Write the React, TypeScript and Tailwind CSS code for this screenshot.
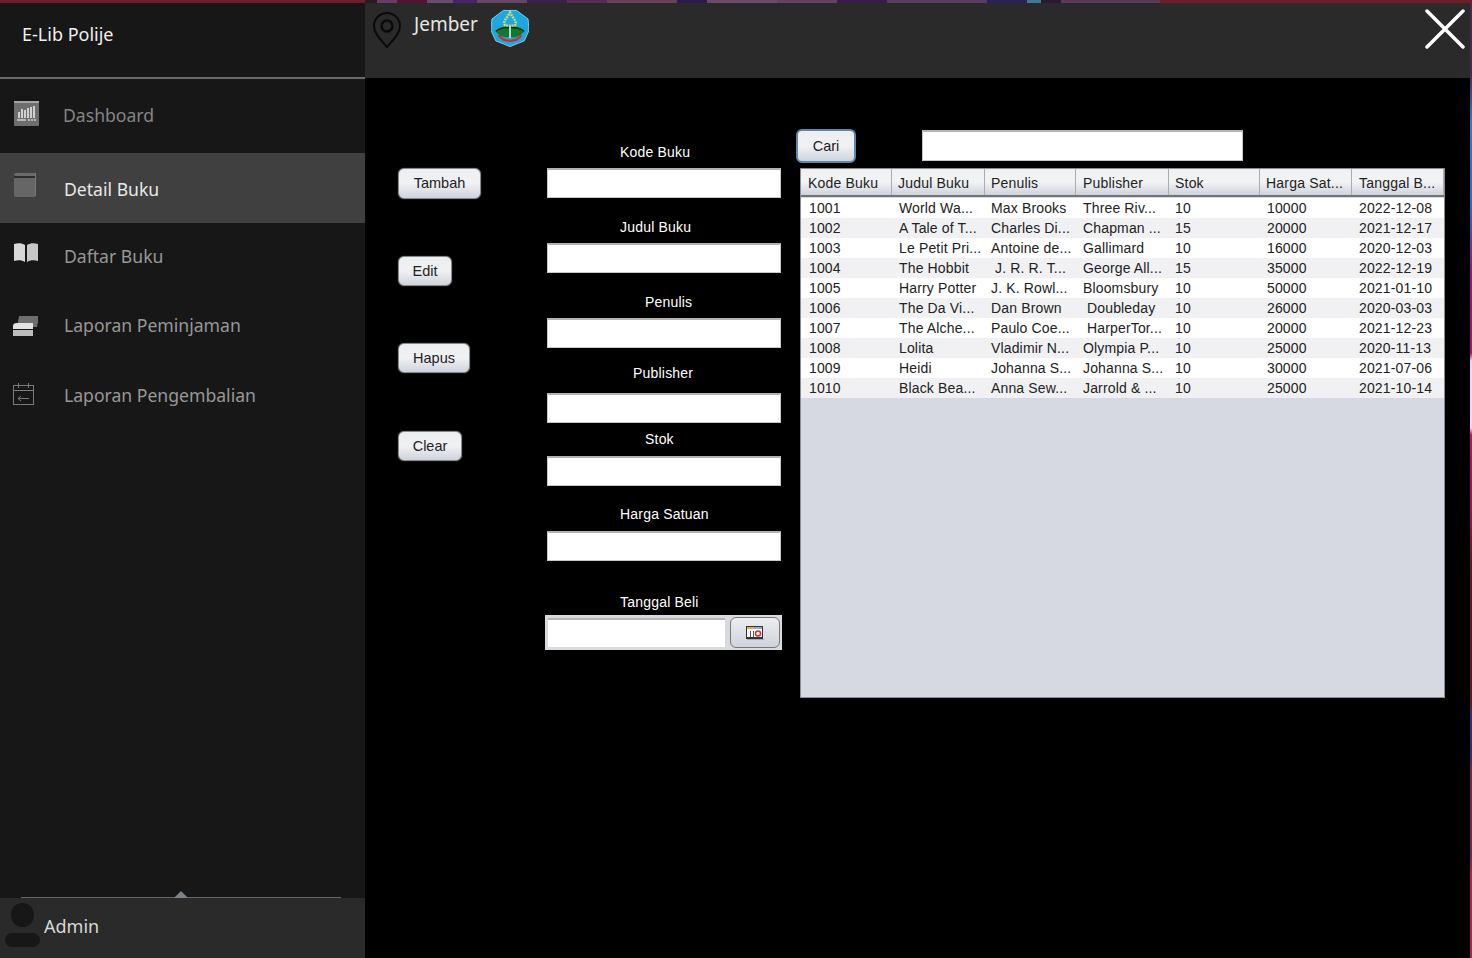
const sideFont = "font-['Noto_Sans','Open_Sans',sans-serif]";
const formFont = "font-['Liberation_Sans',Arial,sans-serif]";

const navItems = [
  { label: "Dashboard", icon: "chart", box: "h-[74px] pl-[63px] pb-[2px]", text: "text-[#858585]" },
  { label: "Detail Buku", icon: "book", box: "h-[70px] pl-[64px] pt-[2px] bg-[#404040]", text: "text-[#e8e8e8]" },
  { label: "Daftar Buku", icon: "open", box: "h-[66px] pl-[64px]", text: "text-[#989898]" },
  { label: "Laporan Peminjaman", icon: "cards", box: "h-[72px] pl-[64px]", text: "text-[#989898]" },
  { label: "Laporan Pengembalian", icon: "cal", box: "h-[68px] pl-[64px]", text: "text-[#989898]" },
];

const NavIcon = ({ name }: { name: string }) => {
  if (name === "chart")
    return (
      <svg width="25" height="25" viewBox="0 0 25 25" className="absolute left-[14px] top-[22px]">
        <rect width="25" height="25" rx="1" fill="#6e6e6e" />
        <rect width="25" height="2" fill="#a5a5a5" />
        <path d="M4 11h2v6H4zM7 8h2v9H7zM10 9h2v8h-2zM13 7h2v10h-2zM16 6h2v11h-2zM19 5h2v12h-2z" fill="#d0d0d0" />
        <path d="M3 18h9v2H3zM14 18h2v2h-2zM17 18h2v2h-2zM20 18h2v2h-2z" fill="#b8b8b8" />
      </svg>
    );
  if (name === "book")
    return (
      <svg width="22" height="24" viewBox="0 0 22 24" className="absolute left-[14px] top-[20px]">
        <path d="M2 0h20v23h-1V1H2z" fill="#7a7a7a" />
        <path d="M0 2q0-2 2-2h19v3H3q-3 0-3-1z" fill="#6b6b6b" />
        <path d="M0 5h21v19H2q-2 0-2-2z" fill="#666" />
        <rect y="3" width="21" height="2" fill="#2c2c2c" />
      </svg>
    );
  if (name === "open")
    return (
      <svg width="24" height="20" viewBox="0 0 24 20" className="absolute left-[14px] top-[20px]">
        <path d="M0 1c4-1.500 8-1 11 1v17c-3-2-7-2-11-1z" fill="#d8d8d8" />
        <path d="M24 1c-4-1.500-8-1-11 1v17c3-2 7-2 11-1z" fill="#c8c8c8" />
      </svg>
    );
  if (name === "cards")
    return (
      <svg width="25" height="20" viewBox="0 0 25 20" className="absolute left-[13px] top-[27px]">
        <path d="M6 0h19v6l-1 5H4z" fill="#6e6e6e" />
        <path d="M4 7h16v6H0V10q0-3 4-3z" fill="#e2e2e2" />
        <rect x="0" y="14" width="20" height="6" fill="#bdbdbd" />
      </svg>
    );
  return (
    <svg width="22" height="24" viewBox="0 0 22 24" className="absolute left-[13px] top-[21px]" fill="none" stroke="#7a7a7a">
      <rect x="0.500" y="3.500" width="20" height="19" />
      <path d="M0 8.500h21M5.500 1v5M15.500 1v5M5 16.500h11M8 14l-3 2.500 3 2.500" />
    </svg>
  );
};

const Field = ({ label, offset, mt, gap }: { label: string; offset: string; mt: string; gap: string }) => (
  <div className={`flex flex-col ${mt}`}>
    <span className={`text-[14px] leading-[16px] tracking-[0.2px] text-white ${offset}`}>{label}</span>
    <div className={`${gap} h-[30px] w-[234px] border border-[#c4c8cc] border-t-2 border-t-[#b3b3b3] bg-white`} />
  </div>
);

const JButton = ({ label, w, h, mt, pt }: { label: string; w: string; h: string; mt: string; pt: string }) => (
  <button className={`flex items-center justify-center ${w} ${h} ${mt} ${pt} rounded-[6px] border border-[#85888c] bg-gradient-to-b from-[#eceef0] via-[#f0f1f4] to-[#cfd3db] text-[14.5px] text-[#222] shadow-[0_0_1px_#999]`}>
    {label}
  </button>
);

const columns = ["Kode Buku", "Judul Buku", "Penulis", "Publisher", "Stok", "Harga Sat...", "Tanggal B..."];
const headerPad = ["pl-[7px]", "pl-[6px]", "pl-[6px]", "pl-[7px]", "pl-[6px]", "pl-[6px]", "pl-[7px]"];
const rows = [
  ["1001", "World Wa...", "Max Brooks", "Three Riv...", "10", "10000", "2022-12-08"],
  ["1002", "A Tale of T...", "Charles Di...", "Chapman ...", "15", "20000", "2021-12-17"],
  ["1003", "Le Petit Pri...", "Antoine de...", "Gallimard", "10", "16000", "2020-12-03"],
  ["1004", "The Hobbit", " J. R. R. T...", "George All...", "15", "35000", "2022-12-19"],
  ["1005", "Harry Potter", "J. K. Rowl...", "Bloomsbury", "10", "50000", "2021-01-10"],
  ["1006", "The Da Vi...", "Dan Brown", " Doubleday", "10", "26000", "2020-03-03"],
  ["1007", "The Alche...", "Paulo Coe...", " HarperTor...", "10", "20000", "2021-12-23"],
  ["1008", "Lolita", "Vladimir N...", "Olympia P...", "10", "25000", "2020-11-13"],
  ["1009", "Heidi", "Johanna S...", "Johanna S...", "10", "30000", "2021-07-06"],
  ["1010", "Black Bea...", "Anna Sew...", "Jarrold & ...", "10", "25000", "2021-10-14"],
];

// wallpaper peeking out above the window
const strip = [
  "w-[12px] bg-[#2a1a22]",
  "w-[20px] bg-[#6a3a6a]",
  "w-[30px] bg-[#5a1030]",
  "w-[26px] bg-[#6a4a70]",
  "w-[24px] bg-[#4a2070]",
  "w-[50px] bg-[#6a4468]",
  "w-[40px] bg-[#3a2050]",
  "w-[40px] bg-[#5a2a58]",
  "w-[70px] bg-[#6a4058]",
  "w-[30px] bg-[#2a1a50]",
  "w-[70px] bg-[#6e4a68]",
  "w-[60px] bg-[#6a4060]",
  "w-[50px] bg-[#3a1a50]",
  "w-[100px] bg-[#5a3a60]",
  "w-[40px] bg-[#2a2060]",
  "w-[14px] bg-[#3a7aa0]",
  "w-[20px] bg-[#2a1a30]",
  "w-[99px] bg-[#5a3a58]",
];

const Emblem = () => (
  <svg width="38" height="39" viewBox="0 0 40 40" className="ml-[13px] mt-[6px] shrink-0">
    <path d="M13 1h14l12 9 1 12-5 11-15 6-15-6L0 22 1 10z" fill="#1ea8e0" stroke="#8accea" />
    <path d="M15 17c-3-5 1-6 5-14 4 8 8 9 5 14z" fill="none" stroke="#d8dc70" strokeWidth="2.500" strokeDasharray="2 1" />
    <path d="M19 19C14 17 8 19 5 23c4 6 10 7 14 6z" fill="#0f7a2c" />
    <path d="M21 19c5-2 11 0 14 4-4 6-10 7-14 6z" fill="#0f7a2c" />
    <path d="M5 23c5-4 10-4 14-4M35 23c-5-4-10-4-14-4" fill="none" stroke="#0a2a10" strokeWidth="1.500" />
    <rect x="19" y="17" width="2" height="13" fill="#c9d4d8" />
    <path d="M8 27c4 6 9 6 12 6s8 0 12-6" fill="none" stroke="#d42a2a" strokeWidth="2.500" />
  </svg>
);

export default function App() {
  return (
    <div className="flex h-[958px] w-[1472px] flex-col overflow-hidden bg-black">
      <div className="flex h-[3px] shrink-0">
        <div className="w-[365px] bg-[#761a27]" />
        {strip.map((s, i) => (
          <div key={i} className={s} />
        ))}
        <div className="flex-1 bg-[#761a27]" />
      </div>
      <div className="flex min-h-0 flex-1">
        <aside className={`flex w-[365px] shrink-0 flex-col bg-[#171717] ${sideFont}`}>
          <div className="h-[76px] border-b-2 border-[#6b6b6b] pl-[22px] pt-[18px] text-[18px] leading-[26px] text-[#f0f0f0]">
            E-Lib Polije
          </div>
          {navItems.map((n) => (
            <div key={n.label} className={`relative flex items-center ${n.box} ${n.text} text-[17.6px]`}>
              <NavIcon name={n.icon} />
              {n.label}
            </div>
          ))}
          <div className="relative flex-1">
            <div className="absolute bottom-0 left-[21px] h-px w-[320px] bg-[#666]" />
            <div className="absolute bottom-0 left-[174px] h-0 w-0 border-x-[7px] border-b-[7px] border-x-transparent border-b-[#7d838a]" />
          </div>
          <div className="relative flex h-[60px] items-center bg-[#2a2a2a] pb-[4px] pl-[44px] text-[18px] text-[#d8d8d8]">
            <div className="absolute left-[11px] top-[5px] h-[24px] w-[23px] rounded-full bg-[#171717]" />
            <div className="absolute left-[5px] top-[35px] h-[14px] w-[35px] rounded-full bg-[#171717]" />
            Admin
          </div>
        </aside>

        <main className={`flex min-w-0 flex-1 flex-col ${formFont}`}>
          <header className="flex h-[75px] shrink-0 bg-[#2a2a2a]">
            <svg width="30" height="36" viewBox="0 0 30 36" className="ml-[7px] mt-[9px] shrink-0" fill="none" stroke="#0a0a0a" strokeWidth="2">
              <path d="M15 35C8 27 2 21 2 14a13 13 0 0 1 26 0c0 7-6 13-13 21z" />
              <circle cx="15" cy="14" r="5.500" strokeWidth="2.500" />
            </svg>
            <span className={`ml-[12px] mt-[9px] text-[19px] leading-[24px] text-[#e6e6e6] ${sideFont}`}>Jember</span>
            <Emblem />
            <div className="flex-1" />
            <svg width="40" height="40" viewBox="0 0 40 40" className="mr-[5px] mt-[6px] shrink-0" stroke="#fff" strokeWidth="3.500" strokeLinecap="round">
              <path d="M2 2l36 36M38 2L2 38" />
            </svg>
          </header>

          <div className="flex flex-1 pl-[33px]">
            <div className="flex w-[149px] shrink-0 flex-col items-start pt-[90px]">
              <JButton label="Tambah" w="w-[83px]" h="h-[31px]" mt="" pt="" />
              <JButton label="Edit" w="w-[54px]" h="h-[30px]" mt="mt-[57px]" pt="pt-[2px]" />
              <JButton label="Hapus" w="w-[72px]" h="h-[30px]" mt="mt-[57px]" pt="pt-[2px]" />
              <JButton label="Clear" w="w-[64px]" h="h-[30px]" mt="mt-[58px]" pt="pt-[2px]" />
            </div>

            <div className="flex w-[253px] shrink-0 flex-col pt-[66px]">
              <Field label="Kode Buku" offset="ml-[73px]" mt="" gap="mt-[8px]" />
              <Field label="Judul Buku" offset="ml-[73px]" mt="mt-[21px]" gap="mt-[8px]" />
              <Field label="Penulis" offset="ml-[98px]" mt="mt-[21px]" gap="mt-[8px]" />
              <Field label="Publisher" offset="ml-[86px]" mt="mt-[17px]" gap="mt-[12px]" />
              <Field label="Stok" offset="ml-[98px]" mt="mt-[8px]" gap="mt-[9px]" />
              <Field label="Harga Satuan" offset="ml-[73px]" mt="mt-[20px]" gap="mt-[9px]" />
              <span className="ml-[73px] mt-[33px] text-[14px] leading-[16px] tracking-[0.2px] text-white">Tanggal Beli</span>
              <div className="-ml-[2px] mt-[5px] flex h-[35px] w-[237px] items-center bg-[#d8dade] pl-[3px]">
                <div className="h-[29px] w-[177px] border-t-2 border-[#b5b5b5] bg-white" />
                <div className="ml-[5px] flex h-[31px] w-[50px] items-center justify-center rounded-[6px] border border-[#777] bg-gradient-to-b from-[#eceef0] to-[#cfd3db]">
                  <svg width="18" height="14" viewBox="0 0 18 14">
                    <rect width="17" height="13" fill="#333" />
                    <rect x="1" y="1" width="7" height="2" fill="#e0b040" />
                    <rect x="8" y="1" width="8" height="2" fill="#8ab0d0" />
                    <rect x="1" y="3" width="15" height="8" fill="#fff" />
                    <rect x="4" y="5" width="1" height="6" fill="#555" />
                    <rect x="7" y="5" width="1" height="6" fill="#555" />
                    <circle cx="12" cy="7.500" r="2.500" fill="none" stroke="#e02a2a" strokeWidth="1.500" />
                    <rect x="1" y="13" width="17" height="1" fill="#a8acb2" />
                  </svg>
                </div>
              </div>
            </div>

            <div className="flex w-[645px] shrink-0 flex-col pt-[51px]">
              <div className="flex h-[39px] items-start">
                <button className="-ml-[4px] flex h-[34px] w-[60px] items-center justify-center rounded-[6px] border-2 border-[#5d87ad] bg-gradient-to-b from-[#eceef0] via-[#f0f1f4] to-[#cfd3db] pt-px text-[14.5px] text-[#222]">
                  Cari
                </button>
                <div className="ml-[66px] mt-px h-[31px] w-[321px] border border-[#c4c8cc] border-t-2 border-t-[#b3b3b3] bg-white" />
              </div>
              <div className="flex h-[530px] w-[645px] flex-col border border-[#8a8e94] bg-[#d6d9e2]">
                <div className="grid h-[28px] grid-cols-[91px_93px_91px_93px_91px_92px_1fr] border-b-2 border-[#70757b] bg-gradient-to-b from-[#eef0f2] via-[#f2f3f5] to-[#cfd3da]">
                  {columns.map((c, j) => (
                    <div key={c} className={`flex items-center border-r border-[#a9adb3] pt-[3px] text-[14px] tracking-[0.2px] whitespace-pre text-[#222] ${headerPad[j]}`}>
                      {c}
                    </div>
                  ))}
                </div>
                <div className="pt-px">
                  {rows.map((r, i) => (
                    <div
                      key={r[0]}
                      className={`grid h-[20px] grid-cols-[90px_92px_92px_92px_92px_92px_1fr] ${i % 2 ? "bg-[#f1f1f3]" : "bg-white"}`}
                    >
                      {r.map((v, j) => (
                        <div key={j} className="flex items-center overflow-hidden pl-[8px] text-[14px] tracking-[0.15px] whitespace-pre text-[#222]">
                          {v}
                        </div>
                      ))}
                    </div>
                  ))}
                </div>
              </div>
            </div>
            <div className="flex-1" />
          </div>
        </main>
        <div className="w-[2px] shrink-0 bg-[linear-gradient(to_bottom,#4a2a4a_0,#4a2a50_70px,#2a7ae0_120px,#2a6ae0_200px,#8a1a80_270px,#b01070_350px,#ffd0ff_358px,#ffd0ff_425px,#c01060_432px,#a01050_515px,#601828_560px,#601828_700px,#3a2a80_712px,#3a2a70_755px,#702a50_768px,#702a50_855px,#c01a50_870px,#c01a50_958px)]" />
      </div>
    </div>
  );
}
